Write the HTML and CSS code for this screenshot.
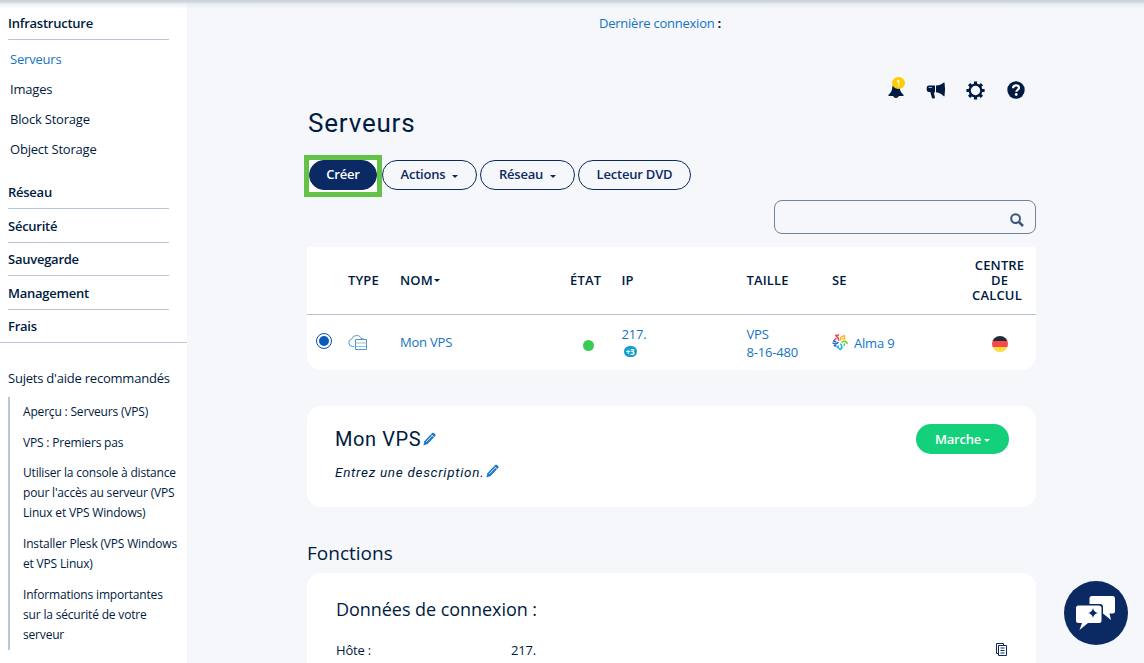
FILE: index.html
```html
<!DOCTYPE html>
<html lang="fr">
<head>
    <meta charset="UTF-8">
    <meta name="viewport" content="width=device-width, initial-scale=1.0">
    <title>Serveurs</title>
    <link rel="stylesheet" href="styles.css">
</head>
<body>
    <div class="top-shadow"></div>
    <aside class="sidebar">
        <nav>
            <div class="nav-title">Infrastructure</div>
            <ul class="nav-list">
                <li class="active">Serveurs</li>
                <li>Images</li>
                <li>Block Storage</li>
                <li>Object Storage</li>
            </ul>
            <div class="nav-title">Réseau</div>
            <div class="nav-title">Sécurité</div>
            <div class="nav-title">Sauvegarde</div>
            <div class="nav-title">Management</div>
            <div class="nav-title last">Frais</div>
        </nav>
        <div class="help-title">Sujets d'aide recommandés</div>
        <ul class="help-list">
            <li>Aperçu : Serveurs (VPS)</li>
            <li>VPS : Premiers pas</li>
            <li>Utiliser la console à distance<br>pour l'accès au serveur (VPS<br>Linux et VPS Windows)</li>
            <li>Installer Plesk (VPS Windows<br>et VPS Linux)</li>
            <li>Informations importantes<br>sur la sécurité de votre<br>serveur</li>
        </ul>
    </aside>

    <main>
        <div class="last-login"><a>Dernière connexion</a> <b>:</b></div>

        <div class="content">
            <div class="tools">
                <span class="bell">
                    <svg width="16" height="17" viewBox="0 0 16 17"><path d="M8 1C5.500 1 4.500 3 4.200 6 3.900 9 2.500 11.500.5 12.800V14h4.700c.4 1.300 1.400 2 2.800 2s2.400-.7 2.800-2h4.700v-1.200c-2-1.300-3.400-3.800-3.700-6.800C11.500 3 10.500 1 8 1z"/></svg>
                    <span class="badge">1</span>
                </span>
                <svg width="20" height="17" viewBox="0 0 20 17"><path d="M3 3.500h6v7H7.800L8.900 15.300q.1 1.200-.9 1.200H6.700q-.6 0-.8-.7L4.300 10H3A2.300 2.300 0 0 1 .7 7.700V5.800A2.300 2.300 0 0 1 3 3.500zM10 3.500C13 3.500 15.500 2.400 17.800.6h.7q1.200 6.600 0 13.600h-.7c-2.200-2.200-4.800-3.700-7.800-3.900z"/><path d="M2.500 5.500h3.500" stroke="#9fb0c4" stroke-width="1"/></svg>
                <svg width="19" height="19" viewBox="0 0 19 19"><circle cx="9.500" cy="9.500" r="5.800" fill="none" stroke="#001b41" stroke-width="2.200"/><g stroke="#001b41" stroke-width="3.200"><path d="M9.500 .4v3M9.500 15.600v3M.4 9.500h3M15.600 9.500h3M3.100 3.100l2 2M13.900 13.900l2 2M3.100 15.900l2-2M13.900 5.100l2-2"/></g></svg>
                <svg width="18" height="18" viewBox="0 0 18 18"><circle cx="9" cy="9" r="8.700"/><path d="M6 7.300C6.100 5.200 7.400 4.300 9.100 4.300s2.900 1 2.900 2.500c0 2-2.700 2-2.700 4" fill="none" stroke="#fff" stroke-width="2.200"/><circle cx="9.200" cy="13.500" r="1.400" fill="#fff"/></svg>
            </div>

            <h1>Serveurs</h1>

            <div class="button-group">
                <div class="highlight"><button class="primary">Créer</button></div>
                <button>Actions <i class="caret"></i></button>
                <button>Réseau <i class="caret"></i></button>
                <button>Lecteur DVD</button>
            </div>

            <div class="search">
                <svg width="14" height="14" viewBox="0 0 14 14"><circle cx="5.600" cy="5.600" r="4.400" fill="none" stroke="#3c557c" stroke-width="2"/><path d="M8.800 8.800l4.200 4.200" stroke="#3c557c" stroke-width="2.600"/></svg>
            </div>

            <div class="server-table">
                <div class="row head">
                    <span></span>
                    <span>TYPE</span>
                    <span>NOM<i class="caret"></i></span>
                    <span>ÉTAT</span>
                    <span>IP</span>
                    <span>TAILLE</span>
                    <span>SE</span>
                    <span class="center">CENTRE<br>DE<br><span class="calcul">CALCUL</span></span>
                </div>
                <div class="row">
                    <span class="radio"></span>
                    <span class="type">
                        <svg width="20" height="17" viewBox="0 0 20 17" fill="none" stroke="#4b97d4"><path d="M6.500 12.500h-2A3.800 3.800 0 0 1 3.700 5 5 5 0 0 1 8.600 1.500c2.200 0 3.700 1 4.400 3 1.800 0 2.800.6 3.300 1.500"/><path d="M7.500 5.500h11v10h-11z"/><path d="M7.500 9h11M7.500 12.500h11" stroke="#8fc0e6"/></svg>
                    </span>
                    <a>Mon VPS</a>
                    <span class="state"><i class="dot"></i></span>
                    <span class="ip"><a>217.</a><span class="more">+3</span></span>
                    <a class="size">VPS<br>8-16-480</a>
                    <span class="os">
                        <svg width="16" height="17" viewBox="0 0 16 17" fill="none" stroke-width="1.500" stroke-linecap="round"><path d="M6.800 6.200C6.500 4 5.500 2.500 3.700 1.500M4 4.500L2.500 6M3.700 1.500L6.500 1" stroke="#f0435c"/><path d="M8.500 6C8.200 3.500 9.800 2 12.500 1.700M10.500 4.700L13 5M12.500 1.700V3.500" stroke="#f8b91c"/><path d="M10 8c2-1.500 3.700-1 5 1M12.500 10l-.5 1.500M14.500 8l.4 1.500" stroke="#78c832"/><path d="M8.500 10c1.500 1.500 1.500 3.500 0 5.500M6.500 12l-1 1.300 3 2.200 1.700-2" stroke="#22b5ee"/><path d="M6 8.500C4.500 10.300 2.700 10.300 1 9M3.700 7.800L1.500 7M4 12l-1.700-.5" stroke="#2560c8"/></svg>
                        <a>Alma 9</a>
                    </span>
                    <span class="center"><span class="flag"></span></span>
                </div>
            </div>

            <section class="card summary">
                <div>
                    <h2>Mon VPS<svg class="pencil" width="13" height="14" viewBox="0 0 13 14"><path d="M.4 13.400L1.400 9.200 9 1.100Q10 .2 11 1.100L12.200 2.300Q13 3.200 12.200 4.100L4.600 12.100z"/><path d="M3.300 9.800L9.200 3.600M8.200 2.400l3 3" stroke="#fff" stroke-width=".8"/></svg></h2>
                    <p>Entrez une description.<svg class="pencil" width="13" height="14" viewBox="0 0 13 14"><path d="M.4 13.400L1.400 9.200 9 1.100Q10 .2 11 1.100L12.200 2.300Q13 3.200 12.200 4.100L4.600 12.100z"/><path d="M3.300 9.800L9.200 3.600M8.200 2.400l3 3" stroke="#fff" stroke-width=".8"/></svg></p>
                </div>
                <button class="status">Marche<i class="caret"></i></button>
            </section>

            <h3>Fonctions</h3>

            <section class="card details">
                <h3>Données de connexion :</h3>
                <div class="detail">
                    <span class="label">Hôte :</span>
                    <span>217.</span>
                    <svg class="copy" width="11" height="13" viewBox="0 0 11 13" fill="none" stroke="#0b2a63"><path d="M2.500 10.500h-2V.5h7v2"/><path d="M2.500 2.500h8v10h-8z" fill="#fff"/><path d="M4.500 5h4M4.500 7.500h4M4.500 10h4"/></svg>
                </div>
            </section>
        </div>
    </main>

    <div class="chat">
        <svg width="42" height="36" viewBox="0 0 42 36"><path d="M17 1h20.500Q40 1 40 3.500V16q0 2.500-2.500 2.500H34.500l1.500 6.500-8-6.500V12Q28 9 25 9H14.500V3.500Q14.500 1 17 1z" fill="#fff"/><path d="M3.500 10.500h20.500Q26.500 10.500 26.500 13v12.500q0 2.500-2.500 2.500H13l-8.500 7 2.500-7H3.500Q1 28 1 25.500V13Q1 10.500 3.500 10.500z" fill="#fff"/><path d="M18 13q.8 4.200 5 5-4.200.8-5 5-.8-4.200-5-5 4.200-.8 5-5z" fill="#0b2a63"/></svg>
    </div>
</body>
</html>
```
FILE: styles.css
```css
* {
    margin: 0;
    padding: 0;
    box-sizing: border-box;
}

body {
    display: flex;
    height: 663px;
    overflow: hidden;
    background-color: #f5f7fb;
    color: #001b41;
    font-family: 'Open Sans', 'Liberation Sans', sans-serif;
    font-size: 13px;
    letter-spacing: -0.2px;
}

ul {
    list-style: none;
}

svg {
    display: block;
    fill: #001b41;
    flex-shrink: 0;
}

svg[fill="none"] {
    fill: none;
}

a {
    color: #1474c4;
}

.top-shadow {
    position: absolute;
    top: 0;
    left: 0;
    right: 0;
    height: 9px;
    background: linear-gradient(#c8d0d8, #d0d7de 20%, rgba(225, 230, 236, 0.6) 45%, rgba(244, 247, 250, 0));
}

/* Sidebar */
.sidebar {
    width: 187px;
    flex-shrink: 0;
    padding-top: 6.5px;
    background-color: #fff;
}

.nav-title {
    height: 33.5px;
    margin: 0 18px 0 8px;
    border-bottom: 1px solid #b9c7d8;
    line-height: 33.4px;
    font-weight: 600;
    letter-spacing: -0.25px;
}

.nav-title:nth-of-type(2n + 3) {
    line-height: 35px;
}

.nav-title.last {
    margin: 0;
    padding-left: 8px;
}

.nav-list {
    padding: 4px 10px 11.5px;
    line-height: 30px;
}

.nav-list .active {
    color: #1474c4;
}

.help-title {
    margin: 25px 0 9px 8px;
    line-height: 20px;
    letter-spacing: -0.22px;
    white-space: nowrap;
}

.help-list {
    margin-left: 8px;
    padding: 5.300px 0 5px 13px;
    border-left: 2px solid #b9c7d8;
    font-size: 12px;
    line-height: 20px;
    letter-spacing: -0.18px;
    white-space: nowrap;
}

.help-list li + li {
    margin-top: 10.6px;
}

/* Main column */
main {
    flex: 1;
}

.last-login {
    padding: 13px 0 0 412px;
    line-height: 20px;
    letter-spacing: -0.24px;
}

.content {
    width: 729px;
    margin-left: 120px;
}

.tools {
    display: flex;
    justify-content: flex-end;
    align-items: center;
    gap: 20px;
    height: 20px;
    margin-top: 47px;
    padding-right: 11px;
}

.tools svg:nth-last-child(2) {
    margin-right: 2px;
}

.bell {
    position: relative;
}

.badge {
    position: absolute;
    top: -5px;
    left: 4px;
    width: 13px;
    height: 12px;
    border-radius: 50%;
    background-color: #fc0;
    color: #fff;
    font-size: 9px;
    font-weight: 600;
    line-height: 12px;
    text-align: center;
}

h1, h2, .summary p {
    font-family: Roboto, 'Open Sans', sans-serif;
    font-weight: 400;
}

h1 {
    height: 34px;
    margin: 6px 0 0 1px;
    font-size: 26px;
    line-height: 34px;
    letter-spacing: 0.8px;
}

.button-group {
    display: flex;
    align-items: flex-start;
    height: 42px;
    margin: 15px 0 0 -3px;
}

button {
    display: flex;
    align-items: center;
    justify-content: center;
    height: 30px;
    padding: 0 0 2px;
    border: 1px solid #0b2a63;
    border-radius: 15px;
    background: none;
    color: #0b2a63;
    font: 600 13px 'Open Sans', sans-serif;
    letter-spacing: -0.2px;
    white-space: nowrap;
}

.button-group > button {
    width: 95px;
    margin: 5px 3px 0 0;
}

.button-group > button:last-child {
    width: 113px;
}

.highlight {
    height: 42px;
    border: 5px solid #64c346;
    background-color: #fff;
}

.button-group .primary {
    width: 68px;
    height: 30px;
    background-color: #0b2a63;
    color: #fff;
}

.caret {
    width: 0;
    height: 0;
    margin: 5px 0 0 7px;
    border: 3px solid transparent;
    border-top-color: currentColor;
    border-bottom: 0;
}

.search {
    display: flex;
    align-items: center;
    justify-content: flex-end;
    width: 262px;
    height: 34px;
    margin: 3px 0 13px auto;
    padding: 5px 11px 0 0;
    border: 1px solid #6f829f;
    border-radius: 8px;
}

/* Server list */
.server-table {
    background-color: #fff;
    border-radius: 3px 3px 14px 14px;
}

.row {
    display: grid;
    grid-template-columns: 41px 52px 170px 51.5px 125px 85.5px 131px 73px;
    align-items: center;
    height: 55px;
}

.row.head {
    height: 68px;
    border-bottom: 1px solid #b3c2d3;
    font-weight: 600;
    line-height: 15px;
    letter-spacing: 0.15px;
}

.head .caret {
    display: inline-block;
    margin: 0 0 3px 1px;
}

.center {
    text-align: center;
}

.calcul {
    padding-right: 5px;
}

.radio {
    width: 16px;
    height: 16px;
    margin: 0 0 3px 9px;
    border: 1px solid #0b4fae;
    border-radius: 50%;
    background: #0b5bbd content-box;
    padding: 2px;
}

.row > a:not(.size) {
    padding-bottom: 1px;
}

.state {
    padding: 5px 0 0 13px;
}

.dot {
    display: block;
    width: 11px;
    height: 11px;
    border-radius: 50%;
    background-color: #38cb55;
}

.ip {
    padding-bottom: 4px;
    line-height: 18px;
}

.ip a {
    display: block;
}

.more {
    display: block;
    width: 13px;
    height: 11px;
    margin: 3px 0 0 2px;
    border-radius: 6px;
    background-color: #11a0cc;
    color: #fff;
    font-size: 8px;
    font-weight: 700;
    line-height: 11px;
    text-align: center;
}

.size {
    padding-top: 1px;
    line-height: 18px;
}

.os {
    display: flex;
    align-items: center;
    gap: 6px;
    padding-bottom: 1px;
}

.os a {
    padding-top: 2px;
}

.flag {
    display: block;
    width: 16px;
    height: 16px;
    margin: 3px auto 0;
    border-radius: 50%;
    background: linear-gradient(#252b32 34%, #f5494e 34%, #f5494e 67%, #fddb3d 67%);
}

/* Cards */
.card {
    background-color: #fff;
    border-radius: 14px;
}

.summary {
    display: flex;
    justify-content: space-between;
    align-items: flex-start;
    height: 101px;
    margin: 36px 0;
    padding: 18px 27px 0 28px;
}

h2 {
    display: flex;
    align-items: center;
    height: 30px;
    font-size: 20px;
    letter-spacing: 0.6px;
}

.summary p {
    display: flex;
    align-items: center;
    height: 20px;
    margin-top: 8px;
    font-size: 13.5px;
    font-style: italic;
    letter-spacing: 0.7px;
}

.pencil {
    margin-left: 2px;
    fill: #2178c9;
}

.summary p .pencil {
    margin-bottom: 3px;
}

.summary .status {
    width: 93px;
    padding-bottom: 0;
    border: none;
    background-color: #15d07a;
    color: #fff;
}

.status .caret {
    margin: 3px 0 0 3px;
}

h3 {
    font-size: 19px;
    font-weight: 400;
    line-height: 20px;
    letter-spacing: 0;
}

.details {
    height: 120px;
    margin-top: 10px;
    padding: 26px 29px 0;
}

.details h3 {
    font-size: 18px;
    letter-spacing: -0.05px;
}

.detail {
    display: flex;
    align-items: center;
    height: 20px;
    margin-top: 21px;
}

.label {
    width: 175px;
}

.copy {
    margin: 0 0 1px auto;
}

/* Chat bubble */
.chat {
    position: absolute;
    left: 1064px;
    top: 581px;
    display: flex;
    align-items: center;
    justify-content: center;
    width: 64px;
    height: 64px;
    border-radius: 50%;
    background-color: #0b2a63;
}
```
